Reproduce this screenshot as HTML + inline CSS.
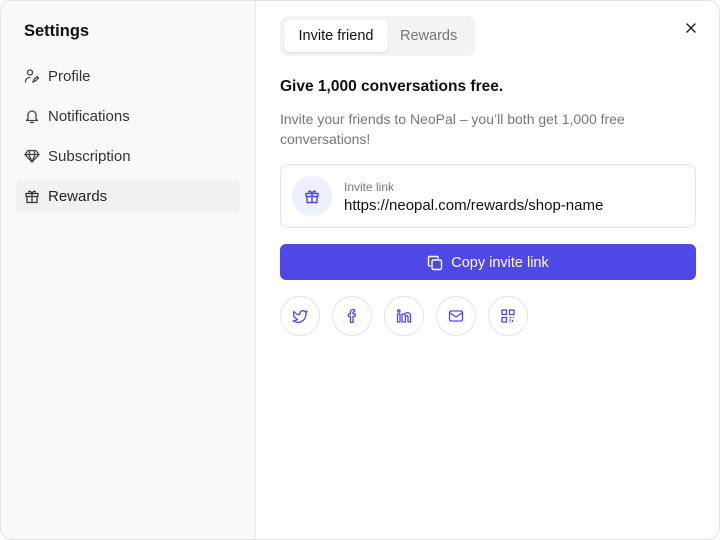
<!DOCTYPE html>
<html><head><style>
*{box-sizing:border-box;margin:0;padding:0}
body{width:720px;height:540px;font-family:"Liberation Sans",sans-serif;background:#fff;overflow:hidden}
.wrap{position:absolute;left:0;top:0;width:720px;height:540px;border-radius:12px;overflow:hidden;background:#fff}
.bord{position:absolute;left:0;top:0;width:720px;height:540px;border:1px solid #e4e4e2;border-radius:12px;pointer-events:none}
.side{position:absolute;left:0;top:0;width:256px;height:540px;background:#f9f9f8;border-right:1px solid #e8e8e6}
.title{position:absolute;left:24px;top:22px;font-size:16.5px;font-weight:bold;color:#111}
.nav{position:absolute;left:16px;width:224px;height:32px;border-radius:6px;font-size:15px;color:#333;line-height:34px;padding-left:32px}
.nav svg{position:absolute;left:8px;top:8px}
.act{background:#f1f1f0;color:#222}
.abs{position:absolute}
.circ{position:absolute;top:296px;width:40px;height:40px;border:1px solid #e4e4e2;border-radius:50%;display:flex;align-items:center;justify-content:center}
</style></head><body>
<div class="wrap">
<div class="side">
<div class="title">Settings</div>
<div class="nav" style="top:60px"><svg width="16" height="16" viewBox="0 0 16 16" fill="none" stroke="#444" stroke-width="1.3" stroke-linecap="round"><circle cx="6" cy="4.5" r="2.5"/><path d="M1.5 14c0-3 2-4.5 4.5-4.5"/><path d="M9 14l1-2.5 3-3 1.5 1.5-3 3z"/></svg>Profile</div>
<div class="nav" style="top:100px"><svg width="16" height="16" viewBox="0 0 16 16" fill="none" stroke="#444" stroke-width="1.3" stroke-linecap="round" stroke-linejoin="round"><path d="M4 11V7a4 4 0 0 1 8 0v4l1.5 1.5h-11z"/><path d="M6.5 14.5h3"/></svg>Notifications</div>
<div class="nav" style="top:140px"><svg width="16" height="16" viewBox="0 0 16 16" fill="none" stroke="#444" stroke-width="1.3" stroke-linejoin="round"><path d="M4 2.5h8l3 4-7 7.5-7-7.5z"/><path d="M1 6.5h14M6 2.5l-1 4 3 7.5 3-7.5-1-4"/></svg>Subscription</div>
<div class="nav act" style="top:180px"><svg width="16" height="16" viewBox="0 0 16 16" fill="none" stroke="#333" stroke-width="1.3" stroke-linejoin="round"><rect x="2" y="5.5" width="12" height="3"/><path d="M3 8.5v6h10v-6M8 5.5v9M8 5.5C6 2 4 3 5 4.5M8 5.5c2-3.5 4-2.5 3-1"/></svg>Rewards</div>
</div>
<div class="abs" style="left:280px;top:16px;width:195px;height:40px;background:#f3f3f2;border-radius:8px"></div>
<div class="abs" style="left:284px;top:20px;width:104px;height:32px;background:#fff;border-radius:6px;box-shadow:0 1px 2px rgba(0,0,0,.08);font-size:14.5px;color:#111;line-height:33px;text-align:center">Invite friend</div>
<div class="abs" style="left:400px;top:20px;font-size:14.5px;color:#777;line-height:33px">Rewards</div>
<svg class="abs" style="left:686px;top:23px" width="10" height="10" viewBox="0 0 10 10" stroke="#222" stroke-width="1.5" stroke-linecap="round"><path d="M1 1l8 8M9 1l-8 8"/></svg>
<div class="abs" style="left:280px;top:78px;font-size:15.5px;font-weight:bold;color:#111">Give 1,000 conversations free.</div>
<div class="abs" style="left:280px;top:109px;width:400px;font-size:14px;color:#777;line-height:20px">Invite your friends to NeoPal – you’ll both get 1,000 free conversations!</div>
<div class="abs" style="left:280px;top:164px;width:416px;height:64px;border:1px solid #e4e4e2;border-radius:8px"></div>
<div class="abs" style="left:292px;top:176px;width:40px;height:40px;border-radius:50%;background:#eef0fd;display:flex;align-items:center;justify-content:center"><svg width="16" height="16" viewBox="0 0 16 16" fill="none" stroke="#5048e5" stroke-width="1.4" stroke-linejoin="round"><rect x="2" y="5.5" width="12" height="3"/><path d="M3 8.5v6h10v-6M8 5.5v9M8 5.5C6 2 4 3 5 4.5M8 5.5c2-3.5 4-2.5 3-1"/></svg></div>
<div class="abs" style="left:344px;top:180px;font-size:12px;color:#777">Invite link</div>
<div class="abs" style="left:344px;top:197px;font-size:15px;color:#111">https://neopal.com/rewards/shop-name</div>
<div class="abs" style="left:280px;top:244px;width:416px;height:36px;background:#5048e5;border-radius:6px;color:#fff;font-size:14.5px;display:flex;align-items:center;justify-content:center;gap:8px;padding-top:1px"><svg width="16" height="16" viewBox="0 0 16 16" fill="none" stroke="#fff" stroke-width="1.4" stroke-linejoin="round"><rect x="5" y="5" width="9.5" height="9.5" rx="1.5"/><path d="M3.5 11H2.5a1 1 0 0 1-1-1V2.5a1 1 0 0 1 1-1H10a1 1 0 0 1 1 1v1"/></svg>Copy invite link</div>
<div class="circ" style="left:280px"><svg width="16" height="16" viewBox="0 0 16 16" fill="none" stroke="#5048e5" stroke-width="1.3" stroke-linejoin="round"><path d="M15 3c-.6.4-1.3.6-2 .7a3 3 0 0 0-5.2 2.2v.7A7 7 0 0 1 2 3.5S-.5 9 5.5 11.5A8 8 0 0 1 1 13c6 3.5 13 0 13-7.5 0-.2 0-.4 0-.6C14.7 4.2 15 3 15 3z"/></svg></div>
<div class="circ" style="left:332px"><svg width="16" height="16" viewBox="0 0 16 16" fill="none" stroke="#5048e5" stroke-width="1.3" stroke-linejoin="round"><path d="M10.5 1.5H9A2.5 2.5 0 0 0 6.5 4v2h-2v2.5h2v6H9v-6h2l.5-2.5H9V4.5a.7.7 0 0 1 .7-.7h.8z"/></svg></div>
<div class="circ" style="left:384px"><svg width="16" height="16" viewBox="0 0 16 16" fill="none" stroke="#5048e5" stroke-width="1.3" stroke-linejoin="round"><rect x="1.5" y="6" width="2.5" height="8"/><circle cx="2.75" cy="3" r="1.2"/><path d="M6 14V6h2.5v1a3 3 0 0 1 6 1.5V14H12V9a1.3 1.3 0 0 0-2.6 0v5z"/></svg></div>
<div class="circ" style="left:436px"><svg width="16" height="16" viewBox="0 0 16 16" fill="none" stroke="#5048e5" stroke-width="1.3" stroke-linejoin="round"><rect x="1.5" y="3" width="13" height="10" rx="1.5"/><path d="M1.5 4.5L8 9l6.5-4.5"/></svg></div>
<div class="circ" style="left:488px"><svg width="16" height="16" viewBox="0 0 16 16" fill="none" stroke="#5048e5" stroke-width="1.3"><rect x="2" y="2" width="4.5" height="4.5"/><rect x="9.5" y="2" width="4.5" height="4.5"/><rect x="2" y="9.5" width="4.5" height="4.5"/><path d="M9.5 9.5h2M13 9.5h1M9.5 12h1.5M12.5 12v2M9.5 14h1"/></svg></div>
</div>
<div class="bord"></div>
</body></html>
